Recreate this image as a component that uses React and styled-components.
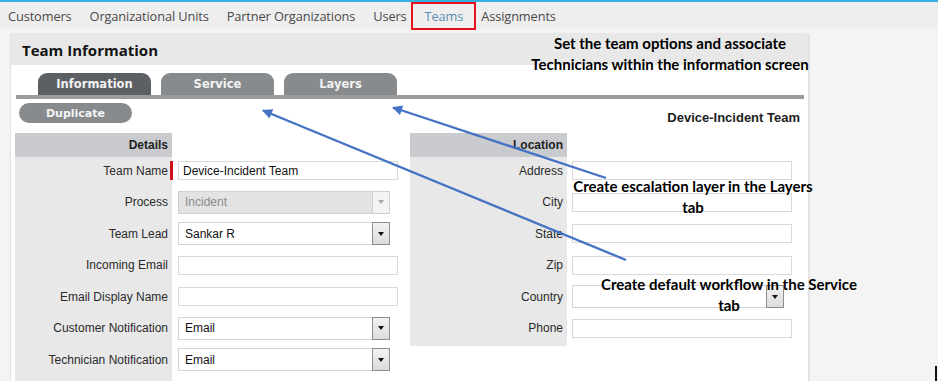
import React from 'react';
import styled, { createGlobalStyle } from 'styled-components';

const Global = createGlobalStyle`
  html, body { margin: 0; padding: 0; background: #f4f4f4; }
  body { font-family: "Liberation Sans", Arial, sans-serif; }
`;

const Page = styled.div`
  position: relative;
  width: 938px;
  height: 381px;
  overflow: hidden;
  background: #f4f4f4;
`;

const Nav = styled.nav`
  height: 27px;
  border-top: 2px solid #35b0e3;
  background: #eeeeee;
  display: flex;
  align-items: stretch;
  gap: 18px;
  padding-left: 8px;
  font-family: "Open Sans", sans-serif;
  font-size: 12.8px;
  letter-spacing: -0.12px;
`;

const NavItem = styled.span`
  position: relative;
  display: flex;
  align-items: center;
  color: ${p => (p.$active ? '#5d8db0' : '#4a4a4a')};
  ${p =>
    p.$highlight &&
    `&::after {
      content: '';
      position: absolute;
      left: -14px;
      right: -13px;
      top: 0;
      bottom: -1px;
      border: 2px solid #e8101a;
    }`}
`;

const Main = styled.main`
  padding: 5px 0 0 11px;
`;

const Panel = styled.section`
  width: 797px;
  height: 360px;
  background: #fff;
  box-shadow: 1px 0 2px rgba(0, 0, 0, 0.13), -1px 0 1px rgba(0, 0, 0, 0.06);
`;

const PanelHeader = styled.h2`
  margin: 0;
  height: 31px;
  background: #e8e8e8;
  display: flex;
  align-items: center;
  padding-left: 11px;
  font-family: "Open Sans", sans-serif;
  font-weight: 700;
  font-size: 15px;
  color: #141414;
`;

const PanelBody = styled.div`
  padding: 8px 4px 0 5px;
`;

const TabStrip = styled.div`
  display: flex;
  gap: 10px;
  padding-left: 22px;
  border-bottom: 4px solid #9c9c9c;
`;

const Tab = styled.div`
  width: 113px;
  height: 22px;
  border-radius: 9px 9px 0 0;
  background: ${p => (p.$active ? '#5c6065' : '#878b8e')};
  color: #f2f2f2;
  display: flex;
  align-items: center;
  justify-content: center;
  font-family: "DejaVu Sans", sans-serif;
  font-weight: 700;
  font-size: 11.5px;
`;

const Toolbar = styled.div`
  display: flex;
  align-items: center;
  justify-content: space-between;
  padding: 4px 4px 0 3px;
  height: 20px;
`;

const PillButton = styled.button`
  width: 113px;
  height: 20px;
  border: none;
  border-radius: 10px;
  background: #878b8e;
  color: #f4f4f4;
  font-family: "DejaVu Sans", sans-serif;
  font-weight: 700;
  font-size: 11px;
  padding: 0;
`;

const RecordTitle = styled.div`
  font-family: "Liberation Sans", Arial, sans-serif;
  font-weight: 700;
  font-size: 13px;
  color: #1e1e1e;
  margin-top: 8px;
`;

const Sections = styled.div`
  display: flex;
  align-items: flex-start;
  gap: 12px;
  margin-top: 10px;
  margin-left: -1px;
`;

const FormGrid = styled.div`
  display: grid;
  grid-template-columns: 157px 220px;
  column-gap: ${p => p.$gap}px;
  grid-auto-rows: 31.5px;
  grid-template-rows: 24px;
  padding-bottom: ${p => p.$extra || 0}px;
  background: linear-gradient(to right, #e8e8e8 157px, transparent 157px);
`;

const HeadCell = styled.div`
  background: #c9cbcf;
  display: flex;
  align-items: center;
  justify-content: flex-end;
  padding-right: 4px;
  font-weight: 700;
  font-size: 12px;
  color: #1f1f1f;
`;

const Label = styled.div`
  position: relative;
  display: flex;
  align-items: center;
  justify-content: flex-end;
  padding: 0 4px 4px 0;
  font-size: 12px;
  color: #2a2a2a;
  ${p =>
    p.$required &&
    `&::after {
      content: '';
      position: absolute;
      right: -1px;
      top: 4px;
      width: 3px;
      height: 19px;
      background: #d0111b;
    }`}
`;

const Field = styled.div`
  display: flex;
  align-items: center;
  padding-bottom: 4px;
`;

const TextInput = styled.div`
  box-sizing: border-box;
  width: 220px;
  height: 19px;
  border: 1px solid #d9d9d9;
  background: #fff;
  display: flex;
  align-items: center;
  padding-left: 4px;
  font-size: 12px;
  color: #111;
`;

const SelectBox = styled.div`
  box-sizing: border-box;
  width: 212px;
  height: 23px;
  border: 1px solid ${p => (p.$disabled ? '#d0d0d0' : '#d4d4d4')};
  background: ${p => (p.$disabled ? '#e3e3e3' : '#fff')};
  display: flex;
  align-items: center;
  justify-content: space-between;
  font-size: 12px;
  color: ${p => (p.$disabled ? '#8c8c8c' : '#111')};
`;

const SelectText = styled.span`
  padding-left: 6px;
`;

const SelectButton = styled.span`
  box-sizing: border-box;
  width: 18px;
  height: 23px;
  margin-right: -1px;
  border: 1px solid ${p => (p.$disabled ? '#cfcfcf' : '#8e8e8e')};
  background: ${p => (p.$disabled ? '#f3f3f3' : 'linear-gradient(#f2f2f2, #dcdcdc)')};
  display: flex;
  align-items: center;
  justify-content: center;
  &::before {
    content: '';
    border-left: 3.5px solid transparent;
    border-right: 3.5px solid transparent;
    border-top: 4px solid ${p => (p.$disabled ? '#a8a8a8' : '#111')};
  }
`;

const Note = styled.div`
  position: absolute;
  left: ${p => p.$x}px;
  top: ${p => p.$y}px;
  width: ${p => p.$w}px;
  text-align: center;
  font-family: Lato, "Open Sans", sans-serif;
  font-weight: 700;
  font-size: 15px;
  line-height: 21px;
  color: #000;
  white-space: nowrap;
`;

const Arrows = styled.svg`
  position: absolute;
  left: 0;
  top: 0;
  pointer-events: none;
`;

const Caret = styled.div`
  position: absolute;
  left: 935px;
  top: 366px;
  width: 2px;
  height: 15px;
  background: #111;
`;

const Input = ({ value }) => <TextInput>{value}</TextInput>;

const Select = ({ value, disabled }) => (
  <SelectBox $disabled={disabled}>
    <SelectText>{value}</SelectText>
    <SelectButton $disabled={disabled} />
  </SelectBox>
);

const details = [
  { label: 'Team Name', required: true, el: <Input value="Device-Incident Team" /> },
  { label: 'Process', el: <Select value="Incident" disabled /> },
  { label: 'Team Lead', el: <Select value="Sankar R" /> },
  { label: 'Incoming Email', el: <Input /> },
  { label: 'Email Display Name', el: <Input /> },
  { label: 'Customer Notification', el: <Select value="Email" /> },
  { label: 'Technician Notification', el: <Select value="Email" /> },
];

const location = [
  { label: 'Address', el: <Input /> },
  { label: 'City', el: <Input /> },
  { label: 'State', el: <Input /> },
  { label: 'Zip', el: <Input /> },
  { label: 'Country', el: <Select value="" /> },
  { label: 'Phone', el: <Input /> },
];

const Section = ({ title, rows, gap, extra }) => (
  <FormGrid $gap={gap} $extra={extra}>
    <HeadCell>{title}</HeadCell>
    <div />
    {rows.map(r => (
      <React.Fragment key={r.label}>
        <Label $required={r.required}>{r.label}</Label>
        <Field>{r.el}</Field>
      </React.Fragment>
    ))}
  </FormGrid>
);

export default function App() {
  return (
    <Page>
      <Global />
      <Nav>
        <NavItem>Customers</NavItem>
        <NavItem>Organizational Units</NavItem>
        <NavItem>Partner Organizations</NavItem>
        <NavItem>Users</NavItem>
        <NavItem $active $highlight>Teams</NavItem>
        <NavItem>Assignments</NavItem>
      </Nav>
      <Main>
        <Panel>
          <PanelHeader>Team Information</PanelHeader>
          <PanelBody>
            <TabStrip>
              <Tab $active>Information</Tab>
              <Tab>Service</Tab>
              <Tab>Layers</Tab>
            </TabStrip>
            <Toolbar>
              <PillButton>Duplicate</PillButton>
              <RecordTitle>Device-Incident Team</RecordTitle>
            </Toolbar>
            <Sections>
              <Section title="Details" rows={details} gap={6} extra={20} />
              <Section title="Location" rows={location} gap={5} />
            </Sections>
          </PanelBody>
        </Panel>
      </Main>

      <Arrows width="938" height="381" viewBox="0 0 938 381">
        <defs>
          <marker id="head" viewBox="0 0 10 10" refX="9" refY="5" markerWidth="13" markerHeight="10" markerUnits="userSpaceOnUse" orient="auto">
            <path d="M0,0 L10,5 L0,10 z" fill="#4472c4" />
          </marker>
        </defs>
        <line x1="626" y1="260" x2="263" y2="110.5" stroke="#4472c4" strokeWidth="2.3" markerEnd="url(#head)" />
        <line x1="606" y1="178" x2="393" y2="107.5" stroke="#4472c4" strokeWidth="2.3" markerEnd="url(#head)" />
      </Arrows>

      <Note $x={520} $y={33} $w={300}>Set the team options and associate<br />Technicians within the information screen</Note>
      <Note $x={543} $y={176} $w={300}>Create escalation layer in the Layers<br />tab</Note>
      <Note $x={579} $y={274} $w={300}>Create default workflow in the Service<br />tab</Note>
      <Caret />
    </Page>
  );
}
